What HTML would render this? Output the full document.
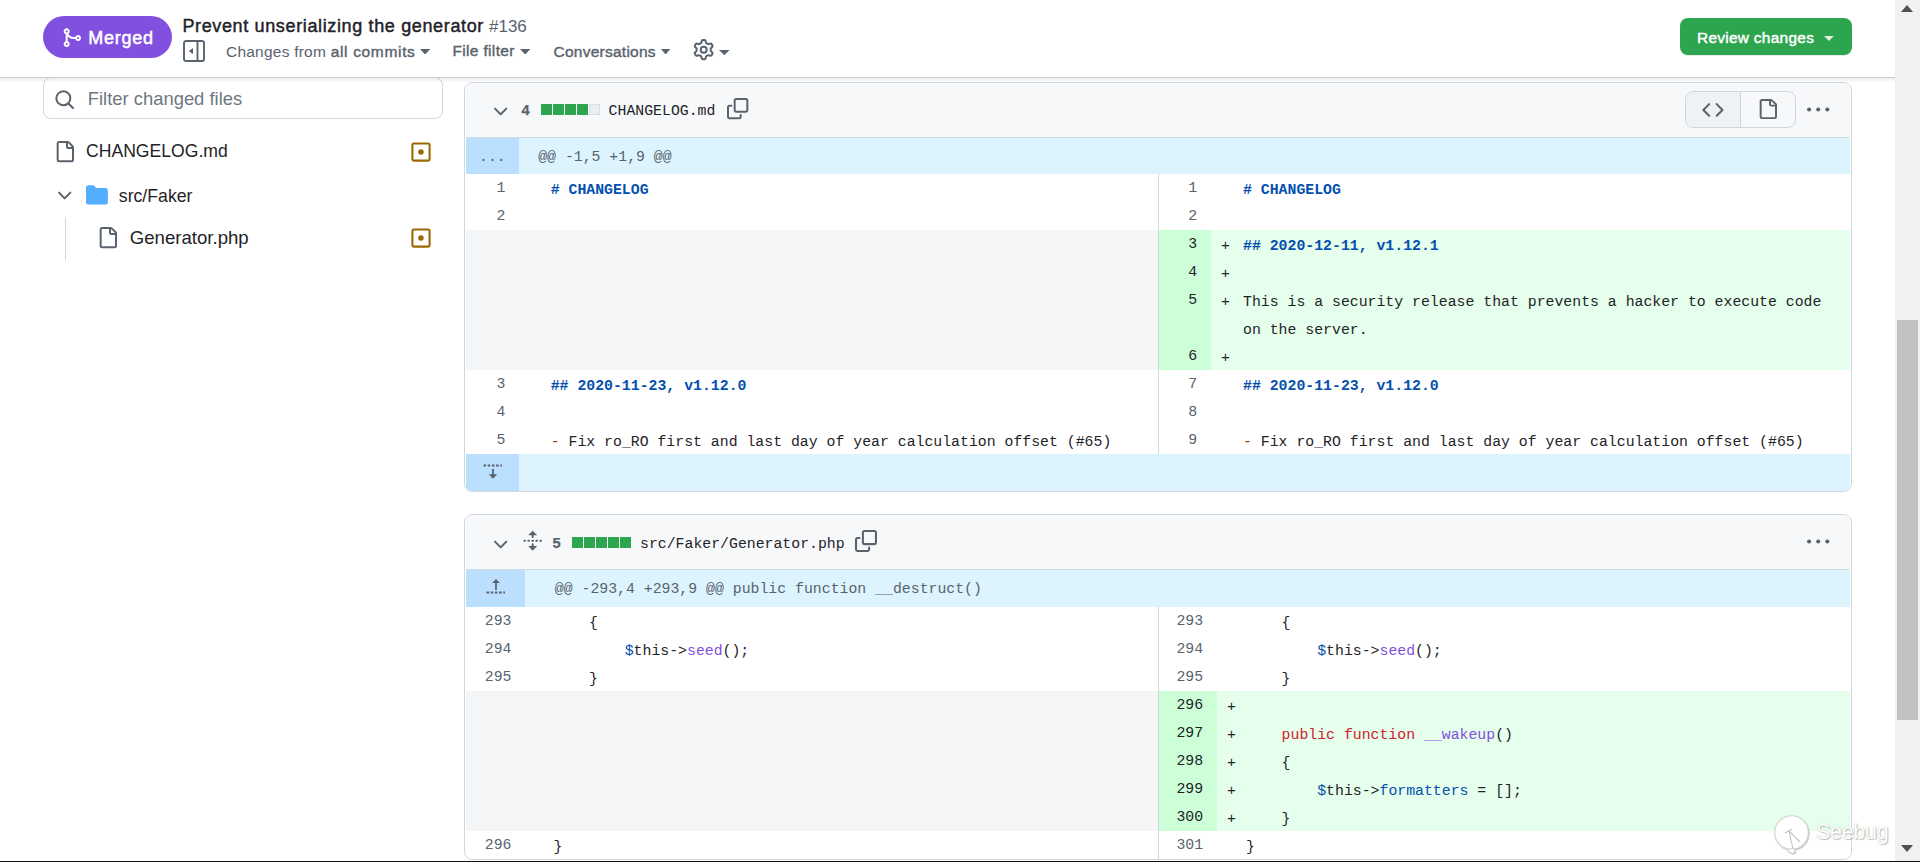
<!DOCTYPE html>
<html><head><meta charset="utf-8"><style>
*{margin:0;padding:0;box-sizing:border-box}
html,body{width:1920px;height:862px;overflow:hidden;background:#fff;position:relative;font-family:'Liberation Sans', sans-serif}
.abs{position:absolute}
.t{position:absolute;white-space:pre;line-height:0;height:0}
.t .b{display:inline-block;vertical-align:baseline;line-height:normal}
.m{font-family:'Liberation Mono', monospace;font-size:14.83px;white-space:pre;position:absolute}
</style></head>
<body>
<div style="position:absolute;left:43px;top:77px;width:400px;height:42px;border:1px solid #d0d7de;border-radius:8px;background:#fff"></div><svg style="position:absolute;overflow:visible;left:53.7px;top:89.1px;width:21.33px;height:21.33px" viewBox="0 0 16 16" preserveAspectRatio="none"><path fill="#59636e" d="M10.68 11.74a6 6 0 0 1-7.922-8.982 6 6 0 0 1 8.982 7.922l3.04 3.04a.749.749 0 0 1-.326 1.275.749.749 0 0 1-.734-.215ZM11.5 7a4.499 4.499 0 1 0-8.997 0A4.499 4.499 0 0 0 11.5 7Z"/></svg><div style="position:absolute;white-space:pre;line-height:1;left:87.8px;top:90.42px;font-size:18.4px;color:#6e7781;font-weight:normal;font-family:'Liberation Sans', sans-serif;">Filter changed files</div><svg style="position:absolute;overflow:visible;left:53.9px;top:140.9px;width:21.33px;height:21.33px" viewBox="0 0 16 16" preserveAspectRatio="none"><path fill="#59636e" d="M2 1.75C2 .784 2.784 0 3.75 0h6.586c.464 0 .909.184 1.237.513l2.914 2.914c.329.328.513.773.513 1.237v9.586A1.75 1.75 0 0 1 13.25 16h-9.5A1.75 1.75 0 0 1 2 14.25Zm1.75-.25a.25.25 0 0 0-.25.25v12.5c0 .138.112.25.25.25h9.5a.25.25 0 0 0 .25-.25V6h-2.75A1.75 1.75 0 0 1 9 4.25V1.5Zm6.75.062V4.25c0 .138.112.25.25.25h2.688l-.011-.013-2.914-2.914-.013-.011Z"/></svg><div style="position:absolute;white-space:pre;line-height:1;left:86px;top:143.10px;font-size:17.6px;color:#1f2328;font-weight:normal;font-family:'Liberation Sans', sans-serif;">CHANGELOG.md</div><svg style="position:absolute;overflow:visible;left:409.9px;top:141px;width:22px;height:22px" viewBox="0 0 16 16" preserveAspectRatio="none"><path fill="#9a6700" d="M13.25 1c.966 0 1.75.784 1.75 1.75v10.5A1.75 1.75 0 0 1 13.25 15H2.75A1.75 1.75 0 0 1 1 13.25V2.75C1 1.784 1.784 1 2.75 1ZM2.75 2.5a.25.25 0 0 0-.25.25v10.5c0 .138.112.25.25.25h10.5a.25.25 0 0 0 .25-.25V2.75a.25.25 0 0 0-.25-.25ZM8 10a2 2 0 1 1-.001-3.999A2 2 0 0 1 8 10Z"/></svg><svg style="position:absolute;overflow:visible;left:54px;top:185.1px;width:21.33px;height:21.33px" viewBox="0 0 16 16" preserveAspectRatio="none"><path fill="#59636e" d="M12.78 5.22a.749.749 0 0 1 0 1.06l-4.25 4.25a.749.749 0 0 1-1.06 0L3.22 6.28a.749.749 0 1 1 1.06-1.06L8 8.939l3.72-3.719a.749.749 0 0 1 1.06 0Z"/></svg><svg style="position:absolute;overflow:visible;left:86px;top:184.1px;width:21.9px;height:21.9px" viewBox="0 0 16 16" preserveAspectRatio="none"><path fill="#54aeff" d="M1.75 1A1.75 1.75 0 0 0 0 2.75v10.5C0 14.216.784 15 1.75 15h12.5A1.75 1.75 0 0 0 16 13.25v-8.5A1.75 1.75 0 0 0 14.25 3H7.5a.25.25 0 0 1-.2-.1l-.9-1.2C6.07 1.26 5.55 1 5 1H1.75Z"/></svg><div style="position:absolute;white-space:pre;line-height:1;left:118.8px;top:187.81px;font-size:17.7px;color:#1f2328;font-weight:normal;font-family:'Liberation Sans', sans-serif;">src/Faker</div><div style="position:absolute;left:65px;top:217px;width:1px;height:43px;background:#d0d7de"></div><svg style="position:absolute;overflow:visible;left:97.3px;top:227.3px;width:21.33px;height:21.33px" viewBox="0 0 16 16" preserveAspectRatio="none"><path fill="#59636e" d="M2 1.75C2 .784 2.784 0 3.75 0h6.586c.464 0 .909.184 1.237.513l2.914 2.914c.329.328.513.773.513 1.237v9.586A1.75 1.75 0 0 1 13.25 16h-9.5A1.75 1.75 0 0 1 2 14.25Zm1.75-.25a.25.25 0 0 0-.25.25v12.5c0 .138.112.25.25.25h9.5a.25.25 0 0 0 .25-.25V6h-2.75A1.75 1.75 0 0 1 9 4.25V1.5Zm6.75.062V4.25c0 .138.112.25.25.25h2.688l-.011-.013-2.914-2.914-.013-.011Z"/></svg><div style="position:absolute;white-space:pre;line-height:1;left:129.8px;top:229.25px;font-size:18.6px;color:#1f2328;font-weight:normal;font-family:'Liberation Sans', sans-serif;">Generator.php</div><svg style="position:absolute;overflow:visible;left:409.9px;top:227.4px;width:22px;height:22px" viewBox="0 0 16 16" preserveAspectRatio="none"><path fill="#9a6700" d="M13.25 1c.966 0 1.75.784 1.75 1.75v10.5A1.75 1.75 0 0 1 13.25 15H2.75A1.75 1.75 0 0 1 1 13.25V2.75C1 1.784 1.784 1 2.75 1ZM2.75 2.5a.25.25 0 0 0-.25.25v10.5c0 .138.112.25.25.25h10.5a.25.25 0 0 0 .25-.25V2.75a.25.25 0 0 0-.25-.25ZM8 10a2 2 0 1 1-.001-3.999A2 2 0 0 1 8 10Z"/></svg><div style="position:absolute;left:464px;top:82px;width:1388px;height:410px;border:1px solid #d0d7de;border-radius:8px;overflow:hidden;background:#fff"><div style="position:absolute;left:-465px;top:-83px;width:1920px;height:862px"><div style="position:absolute;left:466px;top:83px;width:1384px;height:54px;background:#f6f8fa"></div><div style="position:absolute;left:466px;top:137px;width:1384px;height:1px;background:#d0d7de"></div><svg style="position:absolute;overflow:visible;left:489.9px;top:100.8px;width:21.33px;height:21.33px" viewBox="0 0 16 16" preserveAspectRatio="none"><path fill="#59636e" d="M12.78 5.22a.749.749 0 0 1 0 1.06l-4.25 4.25a.749.749 0 0 1-1.06 0L3.22 6.28a.749.749 0 1 1 1.06-1.06L8 8.939l3.72-3.719a.749.749 0 0 1 1.06 0Z"/></svg><div style="position:absolute;white-space:pre;line-height:1;left:521.4px;top:102.84px;font-size:14.6px;color:#59636e;font-weight:bold;font-family:'Liberation Sans', sans-serif;-webkit-text-stroke:0.25px #59636e">4</div><div style="position:absolute;left:541px;top:104px;width:11px;height:11px;background:#2da44e"></div><div style="position:absolute;left:553px;top:104px;width:11px;height:11px;background:#2da44e"></div><div style="position:absolute;left:565px;top:104px;width:11px;height:11px;background:#2da44e"></div><div style="position:absolute;left:577px;top:104px;width:11px;height:11px;background:#2da44e"></div><div style="position:absolute;left:589px;top:104px;width:11px;height:11px;background:#eaeef2;border:1px solid #d8dee4"></div><div style="position:absolute;white-space:pre;line-height:1;left:608.6px;top:104.24px;font-size:14.83px;color:#1f2328;font-weight:normal;font-family:'Liberation Mono', monospace;">CHANGELOG.md</div><svg style="position:absolute;overflow:visible;left:727px;top:97.5px;width:21.33px;height:21.33px" viewBox="0 0 16 16" preserveAspectRatio="none"><path fill="#59636e" d="M0 6.75C0 5.784.784 5 1.75 5h1.5a.75.75 0 0 1 0 1.5h-1.5a.25.25 0 0 0-.25.25v7.5c0 .138.112.25.25.25h7.5a.25.25 0 0 0 .25-.25v-1.5a.75.75 0 0 1 1.5 0v1.5A1.75 1.75 0 0 1 9.25 16h-7.5A1.75 1.75 0 0 1 0 14.25ZM5 1.75C5 .784 5.784 0 6.75 0h7.5C15.216 0 16 .784 16 1.75v7.5A1.75 1.75 0 0 1 14.25 11h-7.5A1.75 1.75 0 0 1 5 9.25Zm1.75-.25a.25.25 0 0 0-.25.25v7.5c0 .138.112.25.25.25h7.5a.25.25 0 0 0 .25-.25v-7.5a.25.25 0 0 0-.25-.25Z"/></svg><div style="position:absolute;left:1685px;top:91px;width:111px;height:37px;border:1px solid #d1d5da;border-radius:8px;background:#f6f8fa;overflow:hidden"></div><div style="position:absolute;left:1686px;top:92px;width:54px;height:35px;background:#eff1f4;border-radius:7px 0 0 7px"></div><div style="position:absolute;left:1740px;top:92px;width:1px;height:35px;background:#d1d5da"></div><svg style="position:absolute;overflow:visible;left:1701.9px;top:98.7px;width:21.9px;height:21.9px" viewBox="0 0 16 16" preserveAspectRatio="none"><path fill="#59636e" d="m11.28 3.22 4.25 4.25a.75.75 0 0 1 0 1.06l-4.25 4.25a.749.749 0 0 1-1.275-.326.749.749 0 0 1 .215-.734L13.94 8l-3.72-3.72a.749.749 0 0 1 .326-1.275.749.749 0 0 1 .734.215Zm-6.56 0a.751.751 0 0 1 1.042.018.751.751 0 0 1 .018 1.042L2.06 8l3.72 3.72a.749.749 0 0 1-.326 1.275.749.749 0 0 1-.734-.215L.47 8.53a.75.75 0 0 1 0-1.06Z"/></svg><svg style="position:absolute;overflow:visible;left:1757.2px;top:98.8px;width:21.33px;height:20px" viewBox="0 0 16 16" preserveAspectRatio="none"><path fill="#59636e" d="M2 1.75C2 .784 2.784 0 3.75 0h6.586c.464 0 .909.184 1.237.513l2.914 2.914c.329.328.513.773.513 1.237v9.586A1.75 1.75 0 0 1 13.25 16h-9.5A1.75 1.75 0 0 1 2 14.25Zm1.75-.25a.25.25 0 0 0-.25.25v12.5c0 .138.112.25.25.25h9.5a.25.25 0 0 0 .25-.25V6h-2.75A1.75 1.75 0 0 1 9 4.25V1.5Zm6.75.062V4.25c0 .138.112.25.25.25h2.688l-.011-.013-2.914-2.914-.013-.011Z"/></svg><svg style="position:absolute;overflow:visible;left:1807px;top:98.7px;width:22.4px;height:22.4px" viewBox="0 0 16 16" preserveAspectRatio="none"><path fill="#59636e" d="M8 9a1.5 1.5 0 1 0 0-3 1.5 1.5 0 0 0 0 3ZM1.5 9a1.5 1.5 0 1 0 0-3 1.5 1.5 0 0 0 0 3Zm13 0a1.5 1.5 0 1 0 0-3 1.5 1.5 0 0 0 0 3Z"/></svg><div style="position:absolute;left:466px;top:138px;width:1384px;height:36px;background:#ddf4ff"></div><div style="position:absolute;left:466px;top:138px;width:53px;height:36px;background:#bbdfff"></div><div style="position:absolute;white-space:pre;line-height:1;left:479px;top:149.64px;font-size:14.83px;color:#59636e;font-weight:normal;font-family:'Liberation Mono', monospace;">...</div><div style="position:absolute;white-space:pre;line-height:1;left:538.2px;top:149.74px;font-size:14.83px;color:#59636e;font-weight:normal;font-family:'Liberation Mono', monospace;">@@ -1,5 +1,9 @@</div><div style="position:absolute;white-space:pre;line-height:1;left:445.30px;width:60px;text-align:right;top:180.64px;font-size:14.83px;color:#59636e;font-family:'Liberation Mono', monospace">1</div><div style="position:absolute;white-space:pre;line-height:1;left:550.7px;top:182.64px;font-size:14.83px;color:#1f2328;font-weight:normal;font-family:'Liberation Mono', monospace;"><span style="color:#0550ae;font-weight:bold"># CHANGELOG</span></div><div style="position:absolute;white-space:pre;line-height:1;left:1137.10px;width:60px;text-align:right;top:180.64px;font-size:14.83px;color:#59636e;font-family:'Liberation Mono', monospace">1</div><div style="position:absolute;white-space:pre;line-height:1;left:1243px;top:182.64px;font-size:14.83px;color:#1f2328;font-weight:normal;font-family:'Liberation Mono', monospace;"><span style="color:#0550ae;font-weight:bold"># CHANGELOG</span></div><div style="position:absolute;white-space:pre;line-height:1;left:445.30px;width:60px;text-align:right;top:208.64px;font-size:14.83px;color:#59636e;font-family:'Liberation Mono', monospace">2</div><div style="position:absolute;white-space:pre;line-height:1;left:1137.10px;width:60px;text-align:right;top:208.64px;font-size:14.83px;color:#59636e;font-family:'Liberation Mono', monospace">2</div><div style="position:absolute;left:466px;top:230px;width:692px;height:28px;background:#f4f5f7"></div><div style="position:absolute;left:1159px;top:230px;width:52px;height:28px;background:#ccffd8"></div><div style="position:absolute;left:1211px;top:230px;width:639px;height:28px;background:#e6ffec"></div><div style="position:absolute;white-space:pre;line-height:1;left:1137.10px;width:60px;text-align:right;top:236.64px;font-size:14.83px;color:#1f2328;font-family:'Liberation Mono', monospace">3</div><div style="position:absolute;white-space:pre;line-height:1;left:1221px;top:238.64px;font-size:14.83px;color:#1f2328;font-weight:normal;font-family:'Liberation Mono', monospace;">+</div><div style="position:absolute;white-space:pre;line-height:1;left:1243px;top:238.64px;font-size:14.83px;color:#1f2328;font-weight:normal;font-family:'Liberation Mono', monospace;"><span style="color:#0550ae;font-weight:bold">## 2020-12-11, v1.12.1</span></div><div style="position:absolute;left:466px;top:258px;width:692px;height:28px;background:#f4f5f7"></div><div style="position:absolute;left:1159px;top:258px;width:52px;height:28px;background:#ccffd8"></div><div style="position:absolute;left:1211px;top:258px;width:639px;height:28px;background:#e6ffec"></div><div style="position:absolute;white-space:pre;line-height:1;left:1137.10px;width:60px;text-align:right;top:264.64px;font-size:14.83px;color:#1f2328;font-family:'Liberation Mono', monospace">4</div><div style="position:absolute;white-space:pre;line-height:1;left:1221px;top:266.64px;font-size:14.83px;color:#1f2328;font-weight:normal;font-family:'Liberation Mono', monospace;">+</div><div style="position:absolute;left:466px;top:286px;width:692px;height:56px;background:#f4f5f7"></div><div style="position:absolute;left:1159px;top:286px;width:52px;height:56px;background:#ccffd8"></div><div style="position:absolute;left:1211px;top:286px;width:639px;height:56px;background:#e6ffec"></div><div style="position:absolute;white-space:pre;line-height:1;left:1137.10px;width:60px;text-align:right;top:292.64px;font-size:14.83px;color:#1f2328;font-family:'Liberation Mono', monospace">5</div><div style="position:absolute;white-space:pre;line-height:1;left:1221px;top:294.64px;font-size:14.83px;color:#1f2328;font-weight:normal;font-family:'Liberation Mono', monospace;">+</div><div style="position:absolute;white-space:pre;line-height:1;left:1243px;top:294.64px;font-size:14.83px;color:#1f2328;font-weight:normal;font-family:'Liberation Mono', monospace;">This is a security release that prevents a hacker to execute code</div><div style="position:absolute;white-space:pre;line-height:1;left:1243px;top:322.64px;font-size:14.83px;color:#1f2328;font-weight:normal;font-family:'Liberation Mono', monospace;">on the server.</div><div style="position:absolute;left:466px;top:342px;width:692px;height:28px;background:#f4f5f7"></div><div style="position:absolute;left:1159px;top:342px;width:52px;height:28px;background:#ccffd8"></div><div style="position:absolute;left:1211px;top:342px;width:639px;height:28px;background:#e6ffec"></div><div style="position:absolute;white-space:pre;line-height:1;left:1137.10px;width:60px;text-align:right;top:348.64px;font-size:14.83px;color:#1f2328;font-family:'Liberation Mono', monospace">6</div><div style="position:absolute;white-space:pre;line-height:1;left:1221px;top:350.64px;font-size:14.83px;color:#1f2328;font-weight:normal;font-family:'Liberation Mono', monospace;">+</div><div style="position:absolute;white-space:pre;line-height:1;left:445.30px;width:60px;text-align:right;top:376.64px;font-size:14.83px;color:#59636e;font-family:'Liberation Mono', monospace">3</div><div style="position:absolute;white-space:pre;line-height:1;left:550.7px;top:378.64px;font-size:14.83px;color:#1f2328;font-weight:normal;font-family:'Liberation Mono', monospace;"><span style="color:#0550ae;font-weight:bold">## 2020-11-23, v1.12.0</span></div><div style="position:absolute;white-space:pre;line-height:1;left:1137.10px;width:60px;text-align:right;top:376.64px;font-size:14.83px;color:#59636e;font-family:'Liberation Mono', monospace">7</div><div style="position:absolute;white-space:pre;line-height:1;left:1243px;top:378.64px;font-size:14.83px;color:#1f2328;font-weight:normal;font-family:'Liberation Mono', monospace;"><span style="color:#0550ae;font-weight:bold">## 2020-11-23, v1.12.0</span></div><div style="position:absolute;white-space:pre;line-height:1;left:445.30px;width:60px;text-align:right;top:404.64px;font-size:14.83px;color:#59636e;font-family:'Liberation Mono', monospace">4</div><div style="position:absolute;white-space:pre;line-height:1;left:1137.10px;width:60px;text-align:right;top:404.64px;font-size:14.83px;color:#59636e;font-family:'Liberation Mono', monospace">8</div><div style="position:absolute;white-space:pre;line-height:1;left:445.30px;width:60px;text-align:right;top:432.64px;font-size:14.83px;color:#59636e;font-family:'Liberation Mono', monospace">5</div><div style="position:absolute;white-space:pre;line-height:1;left:550.7px;top:434.64px;font-size:14.83px;color:#1f2328;font-weight:normal;font-family:'Liberation Mono', monospace;"><span style="color:#953800">-</span> Fix ro_RO first and last day of year calculation offset (#65)</div><div style="position:absolute;white-space:pre;line-height:1;left:1137.10px;width:60px;text-align:right;top:432.64px;font-size:14.83px;color:#59636e;font-family:'Liberation Mono', monospace">9</div><div style="position:absolute;white-space:pre;line-height:1;left:1243px;top:434.64px;font-size:14.83px;color:#1f2328;font-weight:normal;font-family:'Liberation Mono', monospace;"><span style="color:#953800">-</span> Fix ro_RO first and last day of year calculation offset (#65)</div><div style="position:absolute;left:1158px;top:174px;width:1px;height:280px;background:#d0d7de"></div><div style="position:absolute;left:466px;top:454px;width:1384px;height:37px;background:#ddf4ff"></div><div style="position:absolute;left:466px;top:454px;width:53px;height:37px;background:#bbdfff"></div><svg style="position:absolute;left:482px;top:462px;width:22px;height:20px" viewBox="0 0 22 20"><path d="M1.5 3.5H20" stroke="#59636e" stroke-width="2" stroke-dasharray="2.6 1.6"/><path d="M11 7V15" stroke="#59636e" stroke-width="1.8"/><path d="M6.8 12.2L11 16.8L15.2 12.2Z" fill="#59636e"/></svg></div></div><div style="position:absolute;left:464px;top:514px;width:1388px;height:346px;border:1px solid #d0d7de;border-radius:8px;overflow:hidden;background:#fff"><div style="position:absolute;left:-465px;top:-515px;width:1920px;height:862px"><div style="position:absolute;left:466px;top:515px;width:1384px;height:54px;background:#f6f8fa"></div><div style="position:absolute;left:466px;top:569px;width:1384px;height:1px;background:#d0d7de"></div><svg style="position:absolute;overflow:visible;left:490.3px;top:533.9px;width:21.33px;height:21.33px" viewBox="0 0 16 16" preserveAspectRatio="none"><path fill="#59636e" d="M12.78 5.22a.749.749 0 0 1 0 1.06l-4.25 4.25a.749.749 0 0 1-1.06 0L3.22 6.28a.749.749 0 1 1 1.06-1.06L8 8.939l3.72-3.719a.749.749 0 0 1 1.06 0Z"/></svg><svg style="position:absolute;overflow:visible;left:521.9px;top:529.7px;width:21.33px;height:21.33px" viewBox="0 0 16 16" preserveAspectRatio="none"><path fill="#59636e" d="m8.177.677 2.896 2.896a.25.25 0 0 1-.177.427H8.75v1.25a.75.75 0 0 1-1.5 0V4H5.104a.25.25 0 0 1-.177-.427L7.823.677a.25.25 0 0 1 .354 0ZM7.25 10.75a.75.75 0 0 1 1.5 0V12h2.146a.25.25 0 0 1 .177.427l-2.896 2.896a.25.25 0 0 1-.354 0l-2.896-2.896A.25.25 0 0 1 5.104 12H7.25v-1.25Zm-5-2a.75.75 0 0 0 0-1.5h-.5a.75.75 0 0 0 0 1.5h.5ZM6 8a.75.75 0 0 1-.75.75h-.5a.75.75 0 0 1 0-1.5h.5A.75.75 0 0 1 6 8Zm2.25.75a.75.75 0 0 0 0-1.5h-.5a.75.75 0 0 0 0 1.5h.5ZM12 8a.75.75 0 0 1-.75.75h-.5a.75.75 0 0 1 0-1.5h.5A.75.75 0 0 1 12 8Zm2.25.75a.75.75 0 0 0 0-1.5h-.5a.75.75 0 0 0 0 1.5h.5Z"/></svg><div style="position:absolute;white-space:pre;line-height:1;left:552.4px;top:536.04px;font-size:14.6px;color:#59636e;font-weight:bold;font-family:'Liberation Sans', sans-serif;-webkit-text-stroke:0.25px #59636e">5</div><div style="position:absolute;left:572px;top:537px;width:11px;height:11px;background:#2da44e"></div><div style="position:absolute;left:584px;top:537px;width:11px;height:11px;background:#2da44e"></div><div style="position:absolute;left:596px;top:537px;width:11px;height:11px;background:#2da44e"></div><div style="position:absolute;left:608px;top:537px;width:11px;height:11px;background:#2da44e"></div><div style="position:absolute;left:620px;top:537px;width:11px;height:11px;background:#2da44e"></div><div style="position:absolute;white-space:pre;line-height:1;left:640px;top:536.64px;font-size:14.83px;color:#1f2328;font-weight:normal;font-family:'Liberation Mono', monospace;">src/Faker/Generator.php</div><svg style="position:absolute;overflow:visible;left:855px;top:529.8px;width:22px;height:22px" viewBox="0 0 16 16" preserveAspectRatio="none"><path fill="#59636e" d="M0 6.75C0 5.784.784 5 1.75 5h1.5a.75.75 0 0 1 0 1.5h-1.5a.25.25 0 0 0-.25.25v7.5c0 .138.112.25.25.25h7.5a.25.25 0 0 0 .25-.25v-1.5a.75.75 0 0 1 1.5 0v1.5A1.75 1.75 0 0 1 9.25 16h-7.5A1.75 1.75 0 0 1 0 14.25ZM5 1.75C5 .784 5.784 0 6.75 0h7.5C15.216 0 16 .784 16 1.75v7.5A1.75 1.75 0 0 1 14.25 11h-7.5A1.75 1.75 0 0 1 5 9.25Zm1.75-.25a.25.25 0 0 0-.25.25v7.5c0 .138.112.25.25.25h7.5a.25.25 0 0 0 .25-.25v-7.5a.25.25 0 0 0-.25-.25Z"/></svg><svg style="position:absolute;overflow:visible;left:1807px;top:530.5px;width:22.4px;height:22.4px" viewBox="0 0 16 16" preserveAspectRatio="none"><path fill="#59636e" d="M8 9a1.5 1.5 0 1 0 0-3 1.5 1.5 0 0 0 0 3ZM1.5 9a1.5 1.5 0 1 0 0-3 1.5 1.5 0 0 0 0 3Zm13 0a1.5 1.5 0 1 0 0-3 1.5 1.5 0 0 0 0 3Z"/></svg><div style="position:absolute;left:466px;top:570px;width:1384px;height:37px;background:#ddf4ff"></div><div style="position:absolute;left:466px;top:570px;width:59px;height:37px;background:#bbdfff"></div><svg style="position:absolute;left:485px;top:577px;width:22px;height:20px" viewBox="0 0 22 20"><path d="M1.5 15.5H20" stroke="#59636e" stroke-width="2" stroke-dasharray="2.6 1.6"/><path d="M11 13V5" stroke="#59636e" stroke-width="1.8"/><path d="M7 6L11 2L15 6Z" fill="#59636e"/></svg><div style="position:absolute;white-space:pre;line-height:1;left:554.8px;top:582.04px;font-size:14.83px;color:#59636e;font-weight:normal;font-family:'Liberation Mono', monospace;">@@ -293,4 +293,9 @@ public function __destruct()</div><div style="position:absolute;white-space:pre;line-height:1;left:451.50px;width:60px;text-align:right;top:613.64px;font-size:14.83px;color:#59636e;font-family:'Liberation Mono', monospace">293</div><div style="position:absolute;white-space:pre;line-height:1;left:553.5px;top:615.64px;font-size:14.83px;color:#1f2328;font-weight:normal;font-family:'Liberation Mono', monospace;">    {</div><div style="position:absolute;white-space:pre;line-height:1;left:1143.10px;width:60px;text-align:right;top:613.64px;font-size:14.83px;color:#59636e;font-family:'Liberation Mono', monospace">293</div><div style="position:absolute;white-space:pre;line-height:1;left:1246px;top:615.64px;font-size:14.83px;color:#1f2328;font-weight:normal;font-family:'Liberation Mono', monospace;">    {</div><div style="position:absolute;white-space:pre;line-height:1;left:451.50px;width:60px;text-align:right;top:641.64px;font-size:14.83px;color:#59636e;font-family:'Liberation Mono', monospace">294</div><div style="position:absolute;white-space:pre;line-height:1;left:553.5px;top:643.64px;font-size:14.83px;color:#1f2328;font-weight:normal;font-family:'Liberation Mono', monospace;">        <span style="color:#0550ae">$</span>this-&gt;<span style="color:#8250df">seed</span>();</div><div style="position:absolute;white-space:pre;line-height:1;left:1143.10px;width:60px;text-align:right;top:641.64px;font-size:14.83px;color:#59636e;font-family:'Liberation Mono', monospace">294</div><div style="position:absolute;white-space:pre;line-height:1;left:1246px;top:643.64px;font-size:14.83px;color:#1f2328;font-weight:normal;font-family:'Liberation Mono', monospace;">        <span style="color:#0550ae">$</span>this-&gt;<span style="color:#8250df">seed</span>();</div><div style="position:absolute;white-space:pre;line-height:1;left:451.50px;width:60px;text-align:right;top:669.64px;font-size:14.83px;color:#59636e;font-family:'Liberation Mono', monospace">295</div><div style="position:absolute;white-space:pre;line-height:1;left:553.5px;top:671.64px;font-size:14.83px;color:#1f2328;font-weight:normal;font-family:'Liberation Mono', monospace;">    }</div><div style="position:absolute;white-space:pre;line-height:1;left:1143.10px;width:60px;text-align:right;top:669.64px;font-size:14.83px;color:#59636e;font-family:'Liberation Mono', monospace">295</div><div style="position:absolute;white-space:pre;line-height:1;left:1246px;top:671.64px;font-size:14.83px;color:#1f2328;font-weight:normal;font-family:'Liberation Mono', monospace;">    }</div><div style="position:absolute;left:466px;top:691px;width:692px;height:28px;background:#f4f5f7"></div><div style="position:absolute;left:1159px;top:691px;width:58px;height:28px;background:#ccffd8"></div><div style="position:absolute;left:1217px;top:691px;width:633px;height:28px;background:#e6ffec"></div><div style="position:absolute;white-space:pre;line-height:1;left:1143.10px;width:60px;text-align:right;top:697.64px;font-size:14.83px;color:#1f2328;font-family:'Liberation Mono', monospace">296</div><div style="position:absolute;white-space:pre;line-height:1;left:1227px;top:699.64px;font-size:14.83px;color:#1f2328;font-weight:normal;font-family:'Liberation Mono', monospace;">+</div><div style="position:absolute;left:466px;top:719px;width:692px;height:28px;background:#f4f5f7"></div><div style="position:absolute;left:1159px;top:719px;width:58px;height:28px;background:#ccffd8"></div><div style="position:absolute;left:1217px;top:719px;width:633px;height:28px;background:#e6ffec"></div><div style="position:absolute;white-space:pre;line-height:1;left:1143.10px;width:60px;text-align:right;top:725.64px;font-size:14.83px;color:#1f2328;font-family:'Liberation Mono', monospace">297</div><div style="position:absolute;white-space:pre;line-height:1;left:1227px;top:727.64px;font-size:14.83px;color:#1f2328;font-weight:normal;font-family:'Liberation Mono', monospace;">+</div><div style="position:absolute;white-space:pre;line-height:1;left:1246px;top:727.64px;font-size:14.83px;color:#1f2328;font-weight:normal;font-family:'Liberation Mono', monospace;">    <span style="color:#cf222e">public function</span> <span style="color:#8250df">__wakeup</span>()</div><div style="position:absolute;left:466px;top:747px;width:692px;height:28px;background:#f4f5f7"></div><div style="position:absolute;left:1159px;top:747px;width:58px;height:28px;background:#ccffd8"></div><div style="position:absolute;left:1217px;top:747px;width:633px;height:28px;background:#e6ffec"></div><div style="position:absolute;white-space:pre;line-height:1;left:1143.10px;width:60px;text-align:right;top:753.64px;font-size:14.83px;color:#1f2328;font-family:'Liberation Mono', monospace">298</div><div style="position:absolute;white-space:pre;line-height:1;left:1227px;top:755.64px;font-size:14.83px;color:#1f2328;font-weight:normal;font-family:'Liberation Mono', monospace;">+</div><div style="position:absolute;white-space:pre;line-height:1;left:1246px;top:755.64px;font-size:14.83px;color:#1f2328;font-weight:normal;font-family:'Liberation Mono', monospace;">    {</div><div style="position:absolute;left:466px;top:775px;width:692px;height:28px;background:#f4f5f7"></div><div style="position:absolute;left:1159px;top:775px;width:58px;height:28px;background:#ccffd8"></div><div style="position:absolute;left:1217px;top:775px;width:633px;height:28px;background:#e6ffec"></div><div style="position:absolute;white-space:pre;line-height:1;left:1143.10px;width:60px;text-align:right;top:781.64px;font-size:14.83px;color:#1f2328;font-family:'Liberation Mono', monospace">299</div><div style="position:absolute;white-space:pre;line-height:1;left:1227px;top:783.64px;font-size:14.83px;color:#1f2328;font-weight:normal;font-family:'Liberation Mono', monospace;">+</div><div style="position:absolute;white-space:pre;line-height:1;left:1246px;top:783.64px;font-size:14.83px;color:#1f2328;font-weight:normal;font-family:'Liberation Mono', monospace;">        <span style="color:#0550ae">$</span>this-&gt;<span style="color:#0550ae">formatters</span> = [];</div><div style="position:absolute;left:466px;top:803px;width:692px;height:28px;background:#f4f5f7"></div><div style="position:absolute;left:1159px;top:803px;width:58px;height:28px;background:#ccffd8"></div><div style="position:absolute;left:1217px;top:803px;width:633px;height:28px;background:#e6ffec"></div><div style="position:absolute;white-space:pre;line-height:1;left:1143.10px;width:60px;text-align:right;top:809.64px;font-size:14.83px;color:#1f2328;font-family:'Liberation Mono', monospace">300</div><div style="position:absolute;white-space:pre;line-height:1;left:1227px;top:811.64px;font-size:14.83px;color:#1f2328;font-weight:normal;font-family:'Liberation Mono', monospace;">+</div><div style="position:absolute;white-space:pre;line-height:1;left:1246px;top:811.64px;font-size:14.83px;color:#1f2328;font-weight:normal;font-family:'Liberation Mono', monospace;">    }</div><div style="position:absolute;white-space:pre;line-height:1;left:451.50px;width:60px;text-align:right;top:837.64px;font-size:14.83px;color:#59636e;font-family:'Liberation Mono', monospace">296</div><div style="position:absolute;white-space:pre;line-height:1;left:553.5px;top:839.64px;font-size:14.83px;color:#1f2328;font-weight:normal;font-family:'Liberation Mono', monospace;">}</div><div style="position:absolute;white-space:pre;line-height:1;left:1143.10px;width:60px;text-align:right;top:837.64px;font-size:14.83px;color:#59636e;font-family:'Liberation Mono', monospace">301</div><div style="position:absolute;white-space:pre;line-height:1;left:1246px;top:839.64px;font-size:14.83px;color:#1f2328;font-weight:normal;font-family:'Liberation Mono', monospace;">}</div><div style="position:absolute;left:1158px;top:607px;width:1px;height:253px;background:#d0d7de"></div></div></div><div style="position:absolute;left:0px;top:0px;width:1895px;height:77px;background:#fff"></div><div style="position:absolute;left:0px;top:77px;width:1895px;height:1px;background:#cfcfcf"></div><div style="position:absolute;left:0px;top:78px;width:1895px;height:5px;background:linear-gradient(rgba(0,0,0,0.07),rgba(0,0,0,0))"></div><div style="position:absolute;left:43px;top:16px;width:129px;height:42px;background:#8250df;border-radius:21px"></div><svg style="position:absolute;overflow:visible;left:60.8px;top:27.2px;width:21.33px;height:21.33px" viewBox="0 0 16 16" preserveAspectRatio="none"><path fill="#fff" d="M5.45 5.154A4.25 4.25 0 0 0 9.25 7.5h1.378a2.251 2.251 0 1 1 0 1.5H9.25A5.734 5.734 0 0 1 5 7.123v3.505a2.25 2.25 0 1 1-1.5 0V5.372a2.25 2.25 0 1 1 1.95-.218ZM4.25 13.5a.75.75 0 1 0 0-1.5.75.75 0 0 0 0 1.5Zm8.5-4.5a.75.75 0 1 0 0-1.5.75.75 0 0 0 0 1.5ZM5 3.25a.75.75 0 1 0 0 .005V3.25Z"/></svg><div style="position:absolute;white-space:pre;line-height:1;left:88.2px;top:28.96px;font-size:18px;color:#fff;font-weight:normal;font-family:'Liberation Sans', sans-serif;-webkit-text-stroke:0.5px #fff;letter-spacing:0.75px">Merged</div><div style="position:absolute;white-space:pre;line-height:1;left:182.4px;top:16.96px;font-size:18px;color:#1f2328;font-weight:normal;font-family:'Liberation Sans', sans-serif;-webkit-text-stroke:0.45px #1f2328;letter-spacing:0.64px">Prevent unserializing the generator</div><div style="position:absolute;white-space:pre;line-height:1;left:489px;top:18.01px;font-size:17px;color:#59636e;font-weight:normal;font-family:'Liberation Sans', sans-serif;">#136</div><svg style="position:absolute;left:183px;top:40px;width:22px;height:22px" viewBox="0 0 22 22"><rect x="1" y="1" width="20" height="20" rx="2" fill="none" stroke="#59636e" stroke-width="1.9"/><path d="M14.5 1V21" stroke="#59636e" stroke-width="1.9"/><path d="M10 7.9V14.2L5.8 11.05Z" fill="#59636e"/></svg><div style="position:absolute;white-space:pre;line-height:1;left:226px;top:43.68px;font-size:15.5px;color:#59636e;font-weight:normal;font-family:'Liberation Sans', sans-serif;letter-spacing:0.23px">Changes from <span style="-webkit-text-stroke:0.4px #59636e;letter-spacing:0.67px">all commits</span></div><svg style="position:absolute;left:419.6px;top:48.75px;width:10.2px;height:5.5px" viewBox="0 0 10 5" preserveAspectRatio="none"><path fill="#59636e" d="M0 0H10L5 5Z"/></svg><div style="position:absolute;white-space:pre;line-height:1;left:452.4px;top:43.18px;font-size:15.5px;color:#59636e;font-weight:normal;font-family:'Liberation Sans', sans-serif;-webkit-text-stroke:0.4px #59636e;letter-spacing:0.35px">File filter</div><svg style="position:absolute;left:520.4px;top:48.75px;width:10.4px;height:5.5px" viewBox="0 0 10 5" preserveAspectRatio="none"><path fill="#59636e" d="M0 0H10L5 5Z"/></svg><div style="position:absolute;white-space:pre;line-height:1;left:553.5px;top:43.58px;font-size:15.5px;color:#59636e;font-weight:normal;font-family:'Liberation Sans', sans-serif;-webkit-text-stroke:0.4px #59636e;letter-spacing:0.25px">Conversations</div><svg style="position:absolute;left:661.4px;top:48.75px;width:9.3px;height:5.5px" viewBox="0 0 10 5" preserveAspectRatio="none"><path fill="#59636e" d="M0 0H10L5 5Z"/></svg><svg style="position:absolute;overflow:visible;left:693.3px;top:39.3px;width:21.33px;height:21.33px" viewBox="0 0 16 16" preserveAspectRatio="none"><path fill="#59636e" d="M8 0a8.2 8.2 0 0 1 .701.031C9.444.095 9.99.645 10.16 1.29l.288 1.107c.018.066.079.158.212.224.231.114.454.243.668.386.123.082.233.09.299.071l1.103-.303c.644-.176 1.392.021 1.82.63.27.385.506.792.704 1.218.315.675.111 1.422-.364 1.891l-.814.806c-.049.048-.098.147-.088.294.016.257.016.515 0 .772-.01.147.038.246.088.294l.814.806c.475.469.679 1.216.364 1.891a7.977 7.977 0 0 1-.704 1.217c-.428.61-1.176.807-1.82.63l-1.102-.302c-.067-.019-.177-.011-.3.071a5.909 5.909 0 0 1-.668.386c-.133.066-.194.158-.211.224l-.29 1.106c-.168.646-.715 1.196-1.458 1.26a8.006 8.006 0 0 1-1.402 0c-.743-.064-1.289-.614-1.458-1.26l-.289-1.106c-.018-.066-.079-.158-.212-.224a5.738 5.738 0 0 1-.668-.386c-.123-.082-.233-.09-.299-.071l-1.103.303c-.644.176-1.392-.021-1.82-.63a8.12 8.12 0 0 1-.704-1.218c-.315-.675-.111-1.422.363-1.891l.815-.806c.05-.048.098-.147.088-.294a6.214 6.214 0 0 1 0-.772c.01-.147-.038-.246-.088-.294l-.815-.806C.635 6.045.431 5.298.746 4.623a7.92 7.92 0 0 1 .704-1.217c.428-.61 1.176-.807 1.820-.63l1.102.302c.067.019.177.011.3-.071.214-.143.437-.272.668-.386.133-.066.194-.158.211-.224l.29-1.106C6.009.645 6.556.095 7.299.03 7.53.01 7.764 0 8 0Zm-.571 1.525c-.036.003-.108.036-.137.146l-.289 1.105c-.147.561-.549.967-.998 1.189-.173.086-.34.183-.5.29-.417.278-.97.423-1.529.27l-1.103-.303c-.109-.03-.175.016-.195.045-.22.312-.412.644-.573.99-.014.031-.021.11.059.19l.815.806c.411.406.562.957.53 1.456a4.709 4.709 0 0 0 0 .582c.032.499-.119 1.05-.53 1.456l-.815.806c-.081.08-.073.159-.059.19.162.346.353.677.573.989.02.03.085.076.195.046l1.102-.303c.56-.153 1.113-.008 1.53.27.161.107.328.204.501.29.447.222.85.629.997 1.189l.289 1.105c.029.109.101.143.137.146a6.6 6.6 0 0 0 1.142 0c.036-.003.108-.036.137-.146l.289-1.105c.147-.561.549-.967.998-1.189.173-.086.34-.183.5-.29.417-.278.97-.423 1.529-.27l1.103.303c.109.029.175-.016.195-.045.22-.313.411-.644.573-.99.014-.031.021-.11-.059-.19l-.815-.806c-.411-.406-.562-.957-.53-1.456a4.709 4.709 0 0 0 0-.582c-.032-.499.119-1.05.53-1.456l.815-.806c.081-.08.073-.159.059-.19a6.464 6.464 0 0 0-.573-.989c-.02-.03-.085-.076-.195-.046l-1.102.303c-.56.153-1.113.008-1.530-.27a4.440 4.440 0 0 0-.501-.29c-.447-.222-.85-.629-.997-1.189l-.289-1.105c-.029-.11-.101-.143-.137-.146a6.6 6.6 0 0 0-1.142 0ZM11 8a3 3 0 1 1-6 0 3 3 0 0 1 6 0ZM9.5 8a1.5 1.5 0 1 0-3.001.001A1.5 1.5 0 0 0 9.5 8Z"/></svg><svg style="position:absolute;left:719.2px;top:49.8px;width:10.6px;height:5.2px" viewBox="0 0 10 5" preserveAspectRatio="none"><path fill="#59636e" d="M0 0H10L5 5Z"/></svg><div style="position:absolute;left:1680px;top:18px;width:172px;height:37px;background:#2da44e;border-radius:8px;box-shadow:0 1px 0 rgba(31,35,40,0.1)"></div><div style="position:absolute;white-space:pre;line-height:1;left:1697px;top:29.76px;font-size:15.4px;color:#fff;font-weight:normal;font-family:'Liberation Sans', sans-serif;-webkit-text-stroke:0.45px #fff;letter-spacing:0.3px">Review changes</div><svg style="position:absolute;left:1824.2px;top:36px;width:9.8px;height:5px" viewBox="0 0 10 5" preserveAspectRatio="none"><path fill="rgba(255,255,255,0.82)" d="M0 0H10L5 5Z"/></svg><div style="position:absolute;left:1895px;top:0px;width:25px;height:862px;background:#f1f1f1"></div><div style="position:absolute;left:1897px;top:320px;width:21px;height:400px;background:#c1c1c1"></div><svg style="position:absolute;left:1901px;top:5px;width:12px;height:7px" viewBox="0 0 12 7"><path d="M0 7H12L6 0Z" fill="#505050"/></svg><svg style="position:absolute;left:1901px;top:845px;width:12px;height:7px" viewBox="0 0 12 7"><path d="M0 0H12L6 7Z" fill="#505050"/></svg><svg style="position:absolute;left:1770px;top:812px;width:46px;height:48px" viewBox="0 0 46 48"><defs><filter id="sh" x="-20%" y="-20%" width="140%" height="140%"><feDropShadow dx="0.6" dy="0.8" stdDeviation="0.5" flood-color="#000" flood-opacity="0.35"/></filter></defs><g filter="url(#sh)"><circle cx="21.5" cy="20.5" r="16.8" fill="#fff" stroke="#d2d4d2" stroke-width="1.1"/><path d="M17 38Q22 43 25 40L24 36Z" fill="#fff" stroke="#d2d4d2" stroke-width="1"/><path d="M15 21L22 17M19 19L23 37M19 19L30 30" fill="none" stroke="#c4c4c4" stroke-width="1.1"/></g></svg><div style="position:absolute;white-space:pre;line-height:1;left:1816px;top:822.30px;font-size:21.5px;color:#fff;font-weight:normal;font-family:'Liberation Sans', sans-serif;text-shadow:0 0 1px #aaa,1px 1px 1px rgba(0,0,0,0.25);letter-spacing:-0.3px">Seebug</div><div style="position:absolute;left:0px;top:861px;width:1920px;height:1px;background:#111"></div>
</body></html>
